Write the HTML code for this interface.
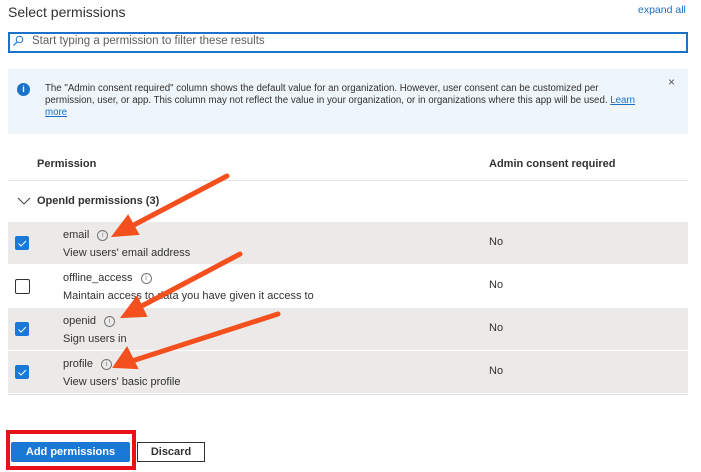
<!DOCTYPE html><html><head><style>
body{margin:0;width:701px;height:472px;background:#fff;font-family:"Liberation Sans",sans-serif;color:#323130;position:relative;overflow:hidden}
.a{position:absolute;white-space:nowrap}
.row{position:absolute;left:8px;width:680px;height:42px}
.g{background:#ebeae9}
.cb{position:absolute;left:7px;top:14px;width:14px;height:14px;border-radius:2px}
.on{background:#1a78d6}
.off{border:1px solid #333;width:13px;height:13px;background:#fff}
.n{position:absolute;left:55px;top:7px;font-size:11px}
.d{position:absolute;left:55px;top:25px;font-size:11px}
.no{position:absolute;left:481px;top:14px;font-size:11px}
.i{display:inline-block;width:9px;height:9px;border:1px solid #777;border-radius:50%;font-size:7px;text-align:center;line-height:9px;margin-left:8px;vertical-align:1px;color:#777}
</style></head><body>
<div class="a" style="left:8px;top:4px;font-size:14px">Select permissions</div>
<div class="a" style="left:638px;top:4px;font-size:10.5px;color:#1a6fc4">expand all</div>
<div class="a" style="left:8px;top:32px;width:676px;height:17px;border:2px solid #1a73c8"></div>
<svg class="a" style="left:12px;top:35px" width="12" height="12"><circle cx="7.5" cy="4.5" r="3.3" fill="none" stroke="#1a73c8" stroke-width="1"/><line x1="5" y1="7" x2="1.5" y2="10.5" stroke="#1a73c8" stroke-width="1.2"/></svg>
<div class="a" style="left:32px;top:35px;font-size:11.5px;color:#605e5c">Start typing a permission to filter these results</div>
<div class="a" style="left:8px;top:69px;width:680px;height:65px;background:#eef5fb"></div>
<div class="a" style="left:17px;top:83px;width:13px;height:13px;border-radius:50%;background:#1a73c8;color:#fff;font-size:9px;font-weight:bold;text-align:center;line-height:13px">i</div>
<div class="a" style="left:45px;top:83px;font-size:9.7px;line-height:12px">The "Admin consent required" column shows the default value for an organization. However, user consent can be customized per<br>permission, user, or app. This column may not reflect the value in your organization, or in organizations where this app will be used. <u style="color:#1a6fc4">Learn</u><br><u style="color:#1a6fc4">more</u></div>
<div class="a" style="left:668px;top:75px;font-size:12px;color:#555">×</div>
<div class="a" style="left:37px;top:158px;font-size:11px;font-weight:bold">Permission</div>
<div class="a" style="left:489px;top:158px;font-size:11px;font-weight:bold">Admin consent required</div>
<div class="a" style="left:8px;top:180px;width:680px;height:1px;background:#e4e4e4"></div>
<svg class="a" style="left:17px;top:197px" width="14" height="8"><path d="M1 1l6 6 6-6" fill="none" stroke="#444" stroke-width="1"/></svg>
<div class="a" style="left:37px;top:195px;font-size:11px;font-weight:bold">OpenId permissions (3)</div>
<div class="row g" style="top:222px"><div class="cb on"><svg width="14" height="14"><path d="M3.5 7.5l2.5 2.5 5-5" fill="none" stroke="#fff" stroke-width="1"/></svg></div><div class="n">email<span class="i">i</span></div><div class="d">View users' email address</div><div class="no">No</div></div>
<div class="row" style="top:265px"><div class="cb off"></div><div class="n">offline_access<span class="i">i</span></div><div class="d">Maintain access to data you have given it access to</div><div class="no">No</div></div>
<div class="row g" style="top:308px"><div class="cb on"><svg width="14" height="14"><path d="M3.5 7.5l2.5 2.5 5-5" fill="none" stroke="#fff" stroke-width="1"/></svg></div><div class="n">openid<span class="i">i</span></div><div class="d">Sign users in</div><div class="no">No</div></div>
<div class="row g" style="top:351px"><div class="cb on"><svg width="14" height="14"><path d="M3.5 7.5l2.5 2.5 5-5" fill="none" stroke="#fff" stroke-width="1"/></svg></div><div class="n">profile<span class="i">i</span></div><div class="d">View users' basic profile</div><div class="no">No</div></div>
<div class="a" style="left:8px;top:394px;width:680px;height:1px;background:#ddd"></div>
<svg class="a" style="left:0;top:0" width="701" height="472">
<g stroke="#f4501e" stroke-width="5" stroke-linecap="round" fill="#f4501e">
<line x1="227" y1="176" x2="130" y2="227"/><polygon points="113,236 128,216 138,234" stroke-width="2"/>
<line x1="240" y1="254" x2="138" y2="308"/><polygon points="122,317 137,297 146,316" stroke-width="2"/>
<line x1="278" y1="314" x2="132" y2="361"/><polygon points="114,367 127,348 137,368" stroke-width="2"/>
</g></svg>
<div class="a" style="left:6px;top:430px;width:122px;height:32px;border:4px solid #e8101a"></div>
<div class="a" style="left:11px;top:442px;width:119px;height:20px;background:#1a78d6;border-radius:2px;color:#fff;font-size:11px;font-weight:bold;text-align:center;line-height:20px">Add permissions</div>
<div class="a" style="left:137px;top:442px;width:66px;height:18px;border:1px solid #333;font-size:11px;font-weight:bold;text-align:center;line-height:18px">Discard</div>
</body></html>
